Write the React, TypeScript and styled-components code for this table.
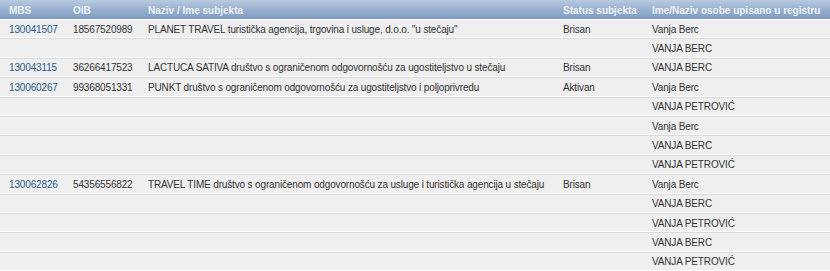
import React from 'react'
import styled, { createGlobalStyle } from "styled-components"

interface IRow {
  mbs?: string;
  oib?: string;
  naziv?: string;
  status?: string;
  osoba: string;
}

const rows: IRow[] = [
  { mbs: "130041507", oib: "18567520989", naziv: 'PLANET TRAVEL turistička agencija, trgovina i usluge, d.o.o. "u stečaju"', status: "Brisan", osoba: "Vanja Berc" },
  { osoba: "VANJA BERC" },
  { mbs: "130043115", oib: "36266417523", naziv: "LACTUCA SATIVA društvo s ograničenom odgovornošću za ugostiteljstvo u stečaju", status: "Brisan", osoba: "VANJA BERC" },
  { mbs: "130060267", oib: "99368051331", naziv: "PUNKT društvo s ograničenom odgovornošću za ugostiteljstvo i poljoprivredu", status: "Aktivan", osoba: "Vanja Berc" },
  { osoba: "VANJA PETROVIĆ" },
  { osoba: "Vanja Berc" },
  { osoba: "VANJA BERC" },
  { osoba: "VANJA PETROVIĆ" },
  { mbs: "130062826", oib: "54356556822", naziv: "TRAVEL TIME društvo s ograničenom odgovornošću za usluge i turistička agencija u stečaju", status: "Brisan", osoba: "Vanja Berc" },
  { osoba: "VANJA BERC" },
  { osoba: "VANJA PETROVIĆ" },
  { osoba: "VANJA BERC" },
  { osoba: "VANJA PETROVIĆ" },
];

const cols = [
  { title: "MBS", width: 64 },
  { title: "OIB", width: 75 },
  { title: "Naziv / Ime subjekta", width: 415 },
  { title: "Status subjekta", width: 89 },
  { title: "Ime/Naziv osobe upisano u registru", width: 187 },
];

const App: React.FC = () => {
  return (
    <>
      <GlobalStyle />
      <Table>
        <colgroup>
          {cols.map((c) => (
            <col key={c.title} style={{ width: c.width }} />
          ))}
        </colgroup>
        <thead>
          <tr>
            {cols.map((c) => (
              <HeadCell key={c.title}>{c.title}</HeadCell>
            ))}
          </tr>
        </thead>
        <tbody>
          {rows.map((r, i) => (
            <Row key={i}>
              <Cell>{r.mbs && <MbsLink href="#">{r.mbs}</MbsLink>}</Cell>
              <Cell>{r.oib}</Cell>
              <Cell>{r.naziv}</Cell>
              <Cell>{r.status}</Cell>
              <Cell>{r.osoba}</Cell>
            </Row>
          ))}
        </tbody>
      </Table>
    </>
  );
}

export default App

const GlobalStyle = createGlobalStyle`
  body {
    margin: 0;
    background: #ffffff;
    font-family: "Liberation Sans", Arial, sans-serif;
  }
`;

const Table = styled.table`
  width: 830px;
  border-collapse: collapse;
  table-layout: fixed;
  font-size: 10px;
  color: #333333;
`;

const HeadCell = styled.th`
  height: 18px;
  padding: 1px 0 0 9px;
  text-align: left;
  font-weight: bold;
  font-size: 10px;
  color: #eef2f8;
  white-space: nowrap;
  background: linear-gradient(to bottom, #b9cadf 0%, #98b0cf 50%, #7f9cc1 100%);
  border-bottom: 1px solid #ffffff;
`;

const Row = styled.tr`
  height: 19.4px;
  background: #efefef;
`;

const Cell = styled.td`
  padding: 0 0 0 9px;
  line-height: 13px;
  letter-spacing: -0.15px;
  white-space: nowrap;
  overflow: hidden;
  border-bottom: 1px solid #dadada;
  box-shadow: inset 0 -1px 0 #ffffff;
`;

const MbsLink = styled.a`
  color: #2b5c8c;
  text-decoration: none;
`;
